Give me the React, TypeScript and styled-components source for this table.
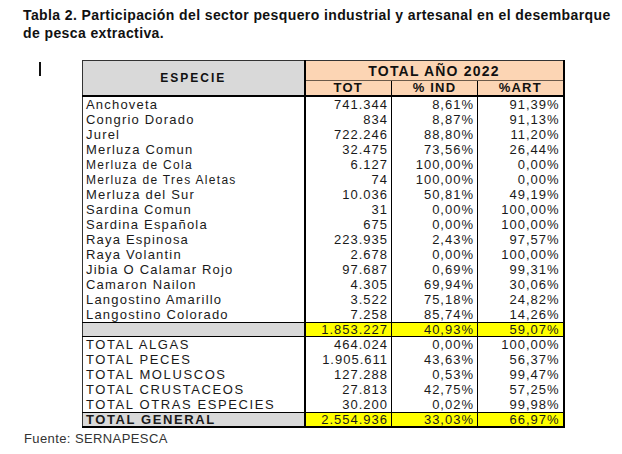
import React from "react";
import styled, { createGlobalStyle } from "styled-components";

const Global = createGlobalStyle`
  html, body { margin: 0; padding: 0; background: #ffffff; }
  body { font-family: "Liberation Sans", Arial, sans-serif; color: #111; }
`;

const Page = styled.div`
  width: 622px;
  height: 454px;
  padding-top: 6px;
  box-sizing: border-box;
  overflow: hidden;
`;

const Title = styled.h1`
  margin: 0 0 18px 23px;
  font-family: "Liberation Sans", Arial, sans-serif;
  font-weight: bold;
  font-size: 14px;
  letter-spacing: 0.4px;
  line-height: 18px;
  color: #111;
  width: 596px;
`;

const TableRow = styled.div`
  display: flex;
  align-items: flex-start;
  padding-left: 39px;
`;

const Cursor = styled.div`
  width: 2px;
  height: 14px;
  margin-top: 2px;
  margin-right: 41px;
  background: #111;
`;

const Table = styled.table`
  border-collapse: collapse;
  table-layout: fixed;
  width: 481px;
  border-top: 1px solid #333;
  border-left: 1px solid #333;
  border-right: 2px solid #000;
  border-bottom: 2px solid #000;
  font-family: "Liberation Sans", Arial, sans-serif;
  font-size: 13px;
  color: #1a1a1a;
`;

const HeadCell = styled.th<{ $tone: "gray" | "peach"; $size?: number; $under?: boolean; $sep?: boolean }>`
  background: ${(p) => (p.$tone === "gray" ? "#d9d9d9" : "#fcd5b4")};
  font-weight: bold;
  font-size: ${(p) => p.$size ?? 13}px;
  letter-spacing: ${(p) => (p.$size && p.$size < 13 ? 2 : 1.2)}px;
  text-align: center;
  padding: 0;
  line-height: 14px;
  border-bottom: ${(p) => (p.$under ? "1px solid #6b5a4a" : "2px solid #000")};
  border-right: ${(p) => (p.$sep ? "1px solid #000" : "none")};
  color: #111;
`;

const SpeciesHead = styled(HeadCell)`
  border-right: 2px solid #000;
`;

const BodyRow = styled.tr<{ $h: number }>`
  height: ${(p) => p.$h}px;
`;

const NameCell = styled.td<{ $kind: "plain" | "small" | "caps"; $fill?: "gray"; $bold?: boolean }>`
  padding: 1px 0 0 3px;
  white-space: nowrap;
  line-height: 14px;
  font-size: ${(p) => (p.$kind === "small" ? 12 : 13)}px;
  letter-spacing: ${(p) => (p.$kind === "caps" ? 1.6 : p.$kind === "small" ? 1.3 : 1.2)}px;
  font-weight: ${(p) => (p.$bold ? "bold" : "normal")};
  background: ${(p) => (p.$fill ? "#d9d9d9" : "transparent")};
  border-right: 2px solid #000;
  overflow: hidden;
`;

const NumCell = styled.td<{ $fill?: "yellow"; $last?: boolean }>`
  padding: 1px 3px 0 0;
  text-align: right;
  white-space: nowrap;
  line-height: 14px;
  letter-spacing: 1px;
  background: ${(p) => (p.$fill ? "#ffff00" : "transparent")};
  border-right: ${(p) => (p.$last ? "none" : "1px solid #000")};
`;

const Divider = styled.tr`
  height: 14px;
  border-top: 1px solid #000;
  border-bottom: 1px solid #000;
  & > td {
    padding-top: 0;
    padding-bottom: 0;
    line-height: 13px;
  }
`;

const Source = styled.p`
  margin: 4px 0 0 24px;
  font-family: "Liberation Sans", Arial, sans-serif;
  font-size: 13px;
  letter-spacing: 0.4px;
  line-height: 14px;
  color: #333;
`;

type Row = { name: string; tot: string; ind: string; art: string; kind?: "plain" | "small" | "caps" };

const species: Row[] = [
  { name: "Anchoveta", tot: "741.344", ind: "8,61%", art: "91,39%" },
  { name: "Congrio Dorado", tot: "834", ind: "8,87%", art: "91,13%" },
  { name: "Jurel", tot: "722.246", ind: "88,80%", art: "11,20%" },
  { name: "Merluza Comun", tot: "32.475", ind: "73,56%", art: "26,44%" },
  { name: "Merluza de Cola", tot: "6.127", ind: "100,00%", art: "0,00%", kind: "small" },
  { name: "Merluza de Tres Aletas", tot: "74", ind: "100,00%", art: "0,00%", kind: "small" },
  { name: "Merluza del Sur", tot: "10.036", ind: "50,81%", art: "49,19%" },
  { name: "Sardina Comun", tot: "31", ind: "0,00%", art: "100,00%" },
  { name: "Sardina Española", tot: "675", ind: "0,00%", art: "100,00%" },
  { name: "Raya Espinosa", tot: "223.935", ind: "2,43%", art: "97,57%" },
  { name: "Raya Volantin", tot: "2.678", ind: "0,00%", art: "100,00%" },
  { name: "Jibia O Calamar Rojo", tot: "97.687", ind: "0,69%", art: "99,31%" },
  { name: "Camaron Nailon", tot: "4.305", ind: "69,94%", art: "30,06%" },
  { name: "Langostino Amarillo", tot: "3.522", ind: "75,18%", art: "24,82%" },
  { name: "Langostino Colorado", tot: "7.258", ind: "85,74%", art: "14,26%" },
];

const totals: Row[] = [
  { name: "TOTAL ALGAS", tot: "464.024", ind: "0,00%", art: "100,00%", kind: "caps" },
  { name: "TOTAL PECES", tot: "1.905.611", ind: "43,63%", art: "56,37%", kind: "caps" },
  { name: "TOTAL MOLUSCOS", tot: "127.288", ind: "0,53%", art: "99,47%", kind: "caps" },
  { name: "TOTAL CRUSTACEOS", tot: "27.813", ind: "42,75%", art: "57,25%", kind: "caps" },
  { name: "TOTAL OTRAS ESPECIES", tot: "30.200", ind: "0,02%", art: "99,98%", kind: "caps" },
];

const DataRow = ({ r, h }: { r: Row; h: number }) => (
  <BodyRow $h={h}>
    <NameCell $kind={r.kind ?? "plain"}>{r.name}</NameCell>
    <NumCell>{r.tot}</NumCell>
    <NumCell>{r.ind}</NumCell>
    <NumCell $last>{r.art}</NumCell>
  </BodyRow>
);

export default function App() {
  return (
    <Page>
      <Global />
      <Title>
        Tabla 2. Participación del sector pesquero industrial y artesanal en el desembarque de pesca extractiva.
      </Title>
      <TableRow>
        <Cursor />
        <Table>
          <colgroup>
            <col style={{ width: 222 }} />
            <col style={{ width: 87 }} />
            <col style={{ width: 86 }} />
            <col style={{ width: 86 }} />
          </colgroup>
          <thead>
            <tr style={{ height: 20 }}>
              <SpeciesHead $tone="gray" $size={12} rowSpan={2}>
                ESPECIE
              </SpeciesHead>
              <HeadCell $tone="peach" $size={14} $under colSpan={3}>
                TOTAL AÑO 2022
              </HeadCell>
            </tr>
            <tr style={{ height: 15 }}>
              <HeadCell $tone="peach" $sep>TOT</HeadCell>
              <HeadCell $tone="peach" $sep>% IND</HeadCell>
              <HeadCell $tone="peach">%ART</HeadCell>
            </tr>
          </thead>
          <tbody>
            {species.map((r) => (
              <DataRow key={r.name} r={r} h={15} />
            ))}
            <Divider>
              <NameCell $kind="plain" $fill="gray" />
              <NumCell $fill="yellow">1.853.227</NumCell>
              <NumCell $fill="yellow">40,93%</NumCell>
              <NumCell $fill="yellow" $last>59,07%</NumCell>
            </Divider>
            {totals.map((r) => (
              <DataRow key={r.name} r={r} h={15} />
            ))}
            <Divider>
              <NameCell $kind="caps" $fill="gray" $bold>TOTAL GENERAL</NameCell>
              <NumCell $fill="yellow">2.554.936</NumCell>
              <NumCell $fill="yellow">33,03%</NumCell>
              <NumCell $fill="yellow" $last>66,97%</NumCell>
            </Divider>
          </tbody>
        </Table>
      </TableRow>
      <Source>Fuente: SERNAPESCA</Source>
    </Page>
  );
}
